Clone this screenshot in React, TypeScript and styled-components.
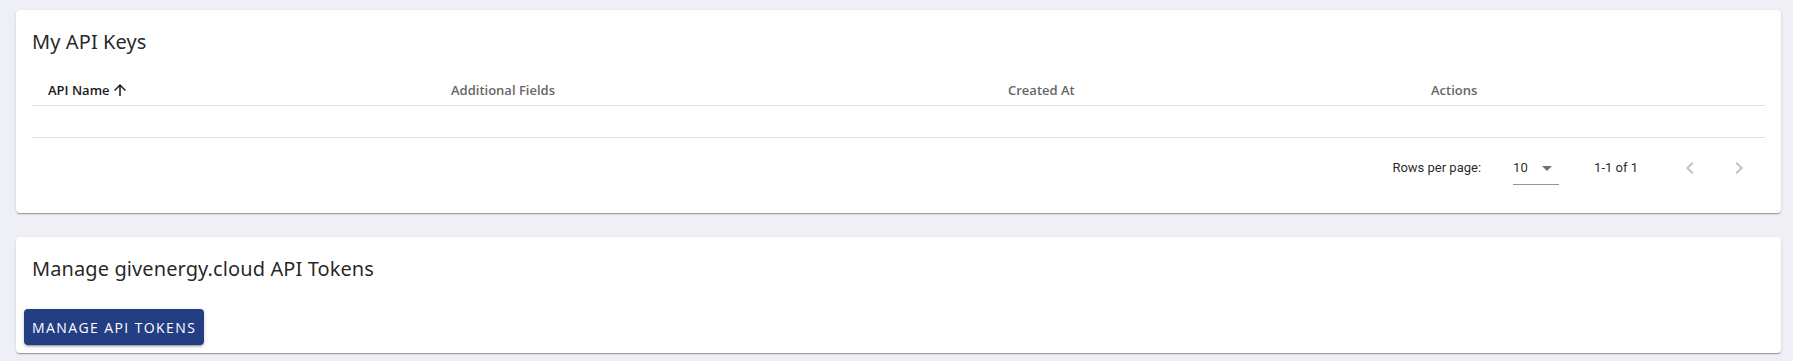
import React from "react";
import styled, { createGlobalStyle } from "styled-components";

const GlobalStyle = createGlobalStyle`
  html, body {
    margin: 0;
    padding: 0;
    background: #eff0f5;
  }
  body {
    font-family: "Open Sans", "Noto Sans", sans-serif;
    color: rgba(0, 0, 0, 0.87);
  }
  * { box-sizing: border-box; }
`;

const Page = styled.div`
  display: flex;
  flex-direction: column;
  gap: 24px;
  padding: 10px 12px 8px 16px;
  width: 1793px;
`;

const Card = styled.section`
  background: #ffffff;
  border-radius: 4px;
  box-shadow: 0px 2px 1px -1px rgba(0, 0, 0, 0.2),
    0px 1px 1px 0px rgba(0, 0, 0, 0.14), 0px 1px 3px 0px rgba(0, 0, 0, 0.12);
  display: flex;
  flex-direction: column;
`;

const CardContent = styled.div`
  padding: 16px;
  display: flex;
  flex-direction: column;
`;

const CardActions = styled.div`
  padding: 8px;
  display: flex;
  align-items: center;
`;

const Title = styled.h2`
  margin: 0;
  font-family: "Noto Sans", "Open Sans", sans-serif;
  font-size: 20px;
  line-height: 32px;
  font-weight: 400;
  letter-spacing: 0.1px;
  color: rgba(0, 0, 0, 0.87);
`;

const TableGrid = styled.div`
  display: grid;
  grid-template-columns: 403fr 557fr 423fr 350fr;
`;

const HeadCell = styled.div<{ $active?: boolean }>`
  display: flex;
  align-items: center;
  padding: 22px 16px 5px;
  height: 48px;
  border-bottom: 1px solid #e0e0e0;
  font-family: "Open Sans", "Noto Sans", sans-serif;
  font-size: 13px;
  line-height: 20px;
  font-weight: 600;
  color: ${(p) => (p.$active ? "#1a1a1a" : "#666666")};
`;

const SortIcon = styled.svg`
  width: 18px;
  height: 18px;
  margin-left: 1px;
  fill: #1a1a1a;
`;

const EmptyRow = styled.div`
  grid-column: 1 / -1;
  height: 32px;
  border-bottom: 1px solid #e0e0e0;
`;

const Pagination = styled.div`
  height: 59px;
  display: flex;
  align-items: center;
  justify-content: flex-end;
  padding-right: 6px;
  font-family: Roboto, "Liberation Sans", sans-serif;
  font-size: 13px;
  color: rgba(0, 0, 0, 0.87);
`;

const PageLabel = styled.span`
  line-height: 20px;
`;

const SelectBox = styled.div`
  position: relative;
  width: 46px;
  height: 32px;
  margin-left: 32px;
  margin-right: 35px;
  margin-top: 2px;
  display: flex;
  align-items: center;
  border-bottom: 1px solid #949494;
`;

const SelectValue = styled.span`
  line-height: 20px;
`;

const DropIcon = styled.svg`
  position: absolute;
  right: 0;
  top: 3px;
  width: 24px;
  height: 24px;
  fill: #707070;
`;

const NavButton = styled.button`
  width: 40px;
  height: 40px;
  padding: 8px;
  border: none;
  background: transparent;
  border-radius: 50%;
  display: flex;
  align-items: center;
  justify-content: center;
  cursor: default;
  & + & {
    margin-left: 9px;
  }
`;

const NavIcon = styled.svg`
  width: 24px;
  height: 24px;
  fill: #c2c2c2;
`;

const RangeText = styled.span`
  line-height: 20px;
  margin-right: 32px;
`;

const PrimaryButton = styled.button`
  height: 36px;
  padding: 0 8px;
  border: none;
  border-radius: 4px;
  background: #233e82;
  color: #ffffff;
  font-family: "Open Sans", "Noto Sans", sans-serif;
  font-size: 14px;
  font-weight: 500;
  letter-spacing: 1.4px;
  text-transform: uppercase;
  box-shadow: 0px 3px 1px -2px rgba(0, 0, 0, 0.2),
    0px 2px 2px 0px rgba(0, 0, 0, 0.14), 0px 1px 5px 0px rgba(0, 0, 0, 0.12);
  cursor: pointer;
`;

const columns = [
  { label: "API Name", active: true },
  { label: "Additional Fields" },
  { label: "Created At" },
  { label: "Actions" },
];

export default function App() {
  return (
    <>
      <GlobalStyle />
      <Page>
        <Card>
          <CardContent>
            <Title>My API Keys</Title>
            <TableGrid>
              {columns.map((c) => (
                <HeadCell key={c.label} $active={c.active}>
                  {c.label}
                  {c.active && (
                    <SortIcon viewBox="0 0 24 24">
                      <path d="M4 12l1.41 1.41L11 7.83V20h2V7.83l5.58 5.59L20 12l-8-8-8 8z" />
                    </SortIcon>
                  )}
                </HeadCell>
              ))}
              <EmptyRow />
            </TableGrid>
            <Pagination>
              <PageLabel>Rows per page:</PageLabel>
              <SelectBox>
                <SelectValue>10</SelectValue>
                <DropIcon viewBox="0 0 24 24">
                  <path d="M7 10l5 5 5-5z" />
                </DropIcon>
              </SelectBox>
              <RangeText>1-1 of 1</RangeText>
              <NavButton aria-label="Previous page">
                <NavIcon viewBox="0 0 24 24">
                  <path d="M15.41 16.59L10.83 12l4.58-4.59L14 6l-6 6 6 6 1.41-1.41z" />
                </NavIcon>
              </NavButton>
              <NavButton aria-label="Next page">
                <NavIcon viewBox="0 0 24 24">
                  <path d="M8.59 16.59L13.17 12 8.59 7.41 10 6l6 6-6 6-1.41-1.41z" />
                </NavIcon>
              </NavButton>
            </Pagination>
          </CardContent>
        </Card>
        <Card>
          <CardContent>
            <Title>Manage givenergy.cloud API Tokens</Title>
          </CardContent>
          <CardActions>
            <PrimaryButton>Manage API Tokens</PrimaryButton>
          </CardActions>
        </Card>
      </Page>
    </>
  );
}
